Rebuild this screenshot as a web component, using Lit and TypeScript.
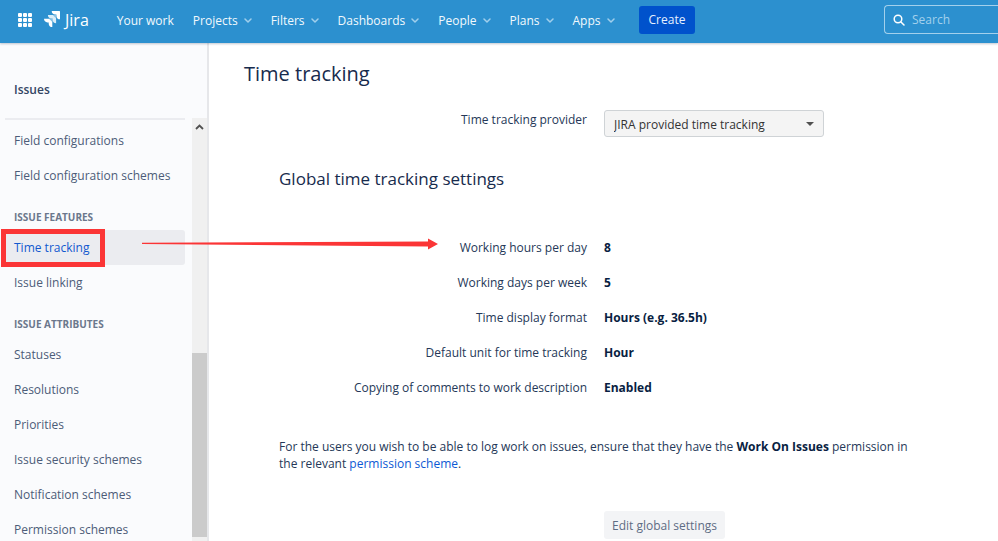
import { LitElement, html, css, svg } from "lit";
import { customElement, property, state } from "lit/decorators.js";
import { classMap } from "lit/directives/class-map.js";

interface NavGroup {
  title?: string;
  items: string[];
}

const chevron = svg`<path d="M1 1l3 3 3-3" fill="none" stroke="currentColor" stroke-width="1.5" stroke-linecap="round" stroke-linejoin="round" />`;

@customElement("app-header")
export class AppHeader extends LitElement {
  static styles = css`
    :host {
      display: flex;
      align-items: center;
      height: 43px;
      flex: none;
      box-sizing: border-box;
      padding: 0 0 4px 17px;
      background: #2c90cf;
      color: #fff;
      box-shadow: 0 1px 2px rgba(9, 30, 66, 0.25);
      z-index: 3;
    }
    button,
    input {
      font: inherit;
      color: inherit;
      border: 0;
      background: none;
      padding: 0;
    }
    button {
      cursor: pointer;
    }
    .switcher,
    .logo {
      display: flex;
      align-items: center;
    }
    .logo {
      gap: 4px;
      margin-left: 11px;
      font-size: 16px;
      line-height: 20px;
      color: #fff;
      text-decoration: none;
    }
    .menu {
      display: flex;
      align-items: center;
      gap: 19px;
      margin-left: 28px;
      white-space: nowrap;
      padding-top: 2px;
    }
    .entry {
      display: flex;
      align-items: center;
      gap: 6px;
      line-height: 28px;
      color: #f2f9fd;
    }
    .entry svg {
      color: #a0cfec;
    }
    .create {
      height: 28px;
      margin-left: 24px;
      padding: 0 10px;
      border-radius: 3px;
      background: #0052cc;
      color: #e6f0ff;
    }
    .search {
      display: flex;
      align-items: center;
      gap: 7px;
      box-sizing: border-box;
      width: 114px;
      height: 29px;
      flex: none;
      margin-left: auto;
      padding-left: 8px;
      border: 1px solid #a3d0ec;
      border-right: 0;
      border-radius: 4px 0 0 4px;
    }
    .search input {
      min-width: 0;
      flex: 1;
      outline: 0;
    }
    .search input::placeholder {
      color: #a3d0ec;
      opacity: 1;
    }
  `;

  private menus = ["Projects", "Filters", "Dashboards", "People", "Plans", "Apps"];

  render() {
    return html`
      <button class="switcher" aria-label="Switch to another product">
        <svg width="16" height="16" viewBox="0 0 16 16" fill="#fff">
          ${[1, 6, 11].map((y) =>
            [1, 6, 11].map((x) => svg`<rect x=${x} y=${y} width="4" height="4" rx="1" />`)
          )}
        </svg>
      </button>
      <a class="logo" href="#">
        <svg width="17" height="17" viewBox="0 0 17 17">
          <path d="M7.700 0H15.400q.6 0 .6.600V8.300C13.900 8.300 12.400 6.800 12.400 4.900V3.600H11.100C9.200 3.600 7.700 2.100 7.700 0z" fill="#fff" />
          <path d="M3.900 3.900H11.500q.6 0 .6.600V12.200C10 12.200 8.500 10.700 8.500 8.800V7.500H7.300C5.400 7.500 3.900 6 3.900 3.900z" fill="#d9edf8" />
          <path d="M0 7.800H7.700q.6 0 .6.600V16.100C6.200 16.100 4.700 14.600 4.700 12.700V11.400H3.400C1.500 11.400 0 9.900 0 7.800z" fill="#fff" />
          <path d="M8.800 3.900H11.500q.6 0 .6.600V7.200z M5 7.800H7.700q.6 0 .6.600V11.100z" fill="#84bfe4" />
        </svg>
        Jira
      </a>
      <nav class="menu">
        <button class="entry">Your work</button>
        ${this.menus.map(
          (name) => html`<button class="entry">
            ${name}<svg width="8" height="5" viewBox="0 0 8 5">${chevron}</svg>
          </button>`
        )}
      </nav>
      <button class="create">Create</button>
      <label class="search">
        <svg width="12" height="12" viewBox="0 0 12 12" fill="none" stroke="#fff" stroke-width="1.500" stroke-linecap="round">
          <circle cx="5" cy="5" r="3.800" />
          <path d="M8 8l3 3" />
        </svg>
        <input type="search" placeholder="Search" aria-label="Search" />
      </label>
    `;
  }
}

@customElement("app-sidebar")
export class AppSidebar extends LitElement {
  static styles = css`
    :host {
      display: flex;
      flex-direction: column;
      box-sizing: border-box;
      width: 209px;
      flex: none;
      background: #fafbfd;
      border-right: 2px solid #e6e7ea;
      color: #44546f;
      position: relative;
      z-index: 2;
    }
    .title {
      margin: 0 22px 0 5px;
      padding: 37px 9px 18px;
      font-size: 12px;
      line-height: 20px;
      font-weight: 600;
      color: #344563;
      border-bottom: 2px solid #ebecf0;
      margin-bottom: -2px;
    }
    .scroll {
      display: flex;
      flex: 1;
      min-height: 0;
      justify-content: space-between;
    }
    .list {
      width: 180px;
      padding: 5px 0 0 5px;
    }
    .item {
      display: block;
      position: relative;
      padding: 0 9px;
      line-height: 35px;
      border-radius: 3px;
      color: #4c5c78;
      text-decoration: none;
      white-space: nowrap;
    }
    .selected {
      background: #ebecf0;
      color: #1259cf;
    }
    .group {
      margin: 0;
      padding: 14px 9px 3px;
      font-size: 10px;
      line-height: 20px;
      font-weight: 700;
      text-transform: uppercase;
      color: #6b778c;
    }
    .bar {
      display: grid;
      grid-template-rows: 18px 217fr 184fr 4fr;
      width: 15px;
      background: #f0f0f0;
      justify-items: center;
      align-items: center;
    }
    .thumb {
      grid-row: 3;
      width: 100%;
      height: 100%;
      background: #cbcbcb;
    }
    .frame {
      position: absolute;
      left: -4px;
      top: -1px;
      box-sizing: border-box;
      width: 104px;
      height: 38px;
      border: 5px solid #fb3536;
    }
    .arrow {
      position: absolute;
      left: 137px;
      top: 8px;
    }
  `;

  @property({ attribute: false }) groups: NavGroup[] = [];
  @state() private current = "Time tracking";

  render() {
    return html`
      <h2 class="title">Issues</h2>
      <div class="scroll">
        <nav class="list">
          ${this.groups.map(
            (g) => html`
              ${g.title ? html`<h3 class="group">${g.title}</h3>` : ""}
              ${g.items.map((name) => this.item(name))}
            `
          )}
        </nav>
        <div class="bar" aria-hidden="true">
          <svg width="9" height="6" viewBox="0 0 9 6">
            <path d="M1 5l3.500-3.500L8 5" fill="none" stroke="#505050" stroke-width="1.800" />
          </svg>
          <span class="thumb"></span>
        </div>
      </div>
    `;
  }

  private item(name: string) {
    const selected = name === this.current;
    return html`<a
      href="#"
      class=${classMap({ item: true, selected })}
      @click=${() => (this.current = name)}
      >${name}${selected
        ? html`<span class="frame"></span>
            <svg class="arrow" width="297" height="12" viewBox="0 0 297 12" fill="#fb3536">
              <path d="M0 4.800L286 3.600V.6l10 5.400-10 5.400V8.400L0 5.900z" />
            </svg>`
        : ""}</a
    >`;
  }
}

@customElement("time-tracking-page")
export class TimeTrackingPage extends LitElement {
  static styles = css`
    :host {
      display: block;
      flex: 1;
      min-width: 0;
      padding: 15px 84px 0 35px;
      color: #253858;
    }
    h1,
    h2 {
      margin: 0;
      font-weight: 400;
      color: #172b4d;
    }
    h1 {
      font-size: 20px;
      line-height: 32px;
    }
    h2 {
      font-size: 17px;
      line-height: 24px;
      margin-top: 30px;
    }
    .section {
      padding-left: 35px;
    }
    .row {
      display: grid;
      grid-template-columns: 308px 1fr;
      column-gap: 17px;
      line-height: 20px;
    }
    .label {
      text-align: right;
    }
    .provider {
      padding-top: 20px;
    }
    .picker {
      display: flex;
      align-items: center;
      position: relative;
      width: 220px;
    }
    select {
      appearance: none;
      box-sizing: border-box;
      width: 100%;
      height: 27px;
      padding: 2px 24px 0 9px;
      border: 1px solid #cfd3d6;
      border-radius: 3px;
      background: #f4f4f4;
      font: inherit;
      color: #333;
    }
    .caret {
      position: absolute;
      right: 10px;
      border: 4px solid transparent;
      border-top: 4px solid #505050;
      border-bottom: 0;
    }
    dl {
      display: grid;
      gap: 15px;
      margin: 47px 0 0;
    }
    dd {
      margin: 0;
      font-weight: 700;
      color: #091e42;
    }
    .note {
      margin: 40px 0 0;
      line-height: 17px;
    }
    .note b {
      color: #091e42;
    }
    .note a {
      color: #0c59d4;
      text-decoration: none;
    }
    .edit {
      grid-column: 2;
      justify-self: start;
      margin-top: 39px;
      height: 28px;
      padding: 2px 8px 0;
      border: 0;
      border-radius: 3px;
      background: #f3f4f6;
      font: inherit;
      color: #5e6c84;
    }
  `;

  private settings: [string, string][] = [
    ["Working hours per day", "8"],
    ["Working days per week", "5"],
    ["Time display format", "Hours (e.g. 36.5h)"],
    ["Default unit for time tracking", "Hour"],
    ["Copying of comments to work description", "Enabled"],
  ];

  render() {
    return html`
      <h1>Time tracking</h1>
      <div class="section">
        <div class="row provider">
          <label class="label" for="provider">Time tracking provider</label>
          <div class="picker">
            <select id="provider">
              <option>JIRA provided time tracking</option>
            </select>
            <span class="caret"></span>
          </div>
        </div>
        <h2>Global time tracking settings</h2>
        <dl>
          ${this.settings.map(
            ([name, value]) => html`<div class="row">
              <dt class="label">${name}</dt>
              <dd>${value}</dd>
            </div>`
          )}
        </dl>
        <p class="note">
          For the users you wish to be able to log work on issues, ensure that they have the
          <b>Work On Issues</b> permission in the relevant <a href="#">permission scheme</a>.
        </p>
        <div class="row"><button class="edit">Edit global settings</button></div>
      </div>
    `;
  }
}

@customElement("app-root")
export class AppRoot extends LitElement {
  static styles = css`
    :host {
      display: flex;
      flex-direction: column;
      height: 100vh;
      overflow: hidden;
      background: #fff;
      font: 12px/20px "Open Sans", "Noto Sans", sans-serif;
    }
    .body {
      display: flex;
      flex: 1;
      min-height: 0;
    }
  `;

  private groups: NavGroup[] = [
    { items: ["Field configurations", "Field configuration schemes"] },
    { title: "Issue features", items: ["Time tracking", "Issue linking"] },
    {
      title: "Issue attributes",
      items: [
        "Statuses",
        "Resolutions",
        "Priorities",
        "Issue security schemes",
        "Notification schemes",
        "Permission schemes",
      ],
    },
  ];

  render() {
    return html`
      <app-header></app-header>
      <div class="body">
        <app-sidebar .groups=${this.groups}></app-sidebar>
        <time-tracking-page></time-tracking-page>
      </div>
    `;
  }
}
